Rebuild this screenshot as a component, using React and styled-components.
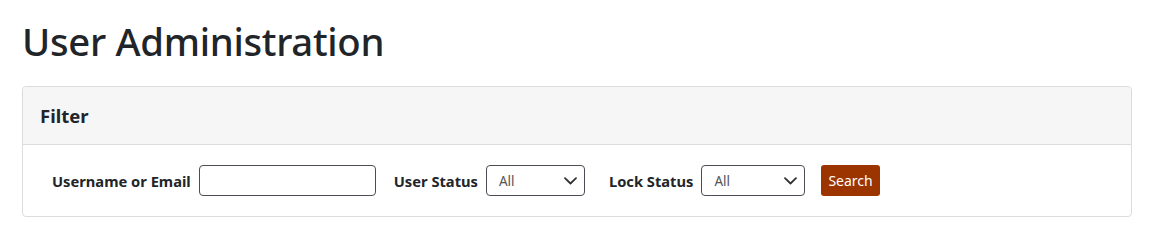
import React from 'react';
import styled, { createGlobalStyle } from 'styled-components';

const GlobalStyle = createGlobalStyle`
  body {
    margin: 0;
    background: #fff;
    font-family: "Noto Sans", "Open Sans", sans-serif;
    color: #212529;
  }
`;

const Page = styled.div`
  padding: 16px 33px 0 22px;
`;

const Title = styled.h1`
  margin: 0 0 20px 0;
  font-size: 38.3px;
  font-weight: 500;
  line-height: 50px;
  letter-spacing: -0.3px;
  color: #212529;
`;

const Card = styled.div`
  border: 1px solid #dcdcdc;
  border-radius: 4px;
  background: #fff;
`;

const CardHeader = styled.div`
  height: 57px;
  display: flex;
  align-items: center;
  padding: 0 17px;
  background: #f6f6f6;
  border-bottom: 1px solid #dcdcdc;
  border-radius: 4px 4px 0 0;
`;

const CardTitle = styled.h5`
  margin: 0;
  font-size: 18.5px;
  font-weight: 700;
  color: #212529;
`;

const FilterRow = styled.div`
  display: flex;
  align-items: center;
  height: 71px;
  padding: 0 29px;
`;

const Field = styled.div`
  display: flex;
  align-items: center;
  gap: 8px;
  margin-right: ${props => props.spacing || 18}px;
`;

const Label = styled.label`
  font-size: 14.7px;
  font-weight: 700;
  color: #212529;
  white-space: nowrap;
`;

const TextInput = styled.input`
  box-sizing: border-box;
  width: ${props => props.width}px;
  height: 31px;
  border: 1px solid #4a4d55;
  border-radius: 4px;
  padding: 0 8px;
  font-family: inherit;
  font-size: 14px;
`;

const SelectBox = styled.div`
  box-sizing: border-box;
  width: ${props => props.width}px;
  height: 31px;
  border: 1px solid #4a4d55;
  border-radius: 4px;
  display: flex;
  align-items: center;
  justify-content: space-between;
  padding: 0 7px 0 12px;
  font-size: 13.5px;
  color: #555;
`;

const SearchButton = styled.button`
  height: 31px;
  padding: 0 7px;
  border: none;
  border-radius: 3px;
  background: #9c3400;
  color: #fff;
  font-family: inherit;
  font-size: 14px;
  cursor: pointer;
`;

const Chevron = () => (
  <svg width="13" height="8" viewBox="0 0 13 8" fill="none">
    <path d="M1 1.2l5.5 5.3L12 1.2" stroke="#333" strokeWidth="1.8" strokeLinecap="round" strokeLinejoin="round" />
  </svg>
);

const Select = ({ width, value }) => (
  <SelectBox width={width}>
    <span>{value}</span>
    <Chevron />
  </SelectBox>
);

export default function App() {
  return (
    <>
      <GlobalStyle />
      <Page>
        <Title>User Administration</Title>
        <Card>
          <CardHeader>
            <CardTitle>Filter</CardTitle>
          </CardHeader>
          <FilterRow>
            <Field>
              <Label>Username or Email</Label>
              <TextInput width={177} />
            </Field>
            <Field spacing={24}>
              <Label>User Status</Label>
              <Select width={99} value="All" />
            </Field>
            <Field spacing={16}>
              <Label>Lock Status</Label>
              <Select width={104} value="All" />
            </Field>
            <SearchButton>Search</SearchButton>
          </FilterRow>
        </Card>
      </Page>
    </>
  );
}
